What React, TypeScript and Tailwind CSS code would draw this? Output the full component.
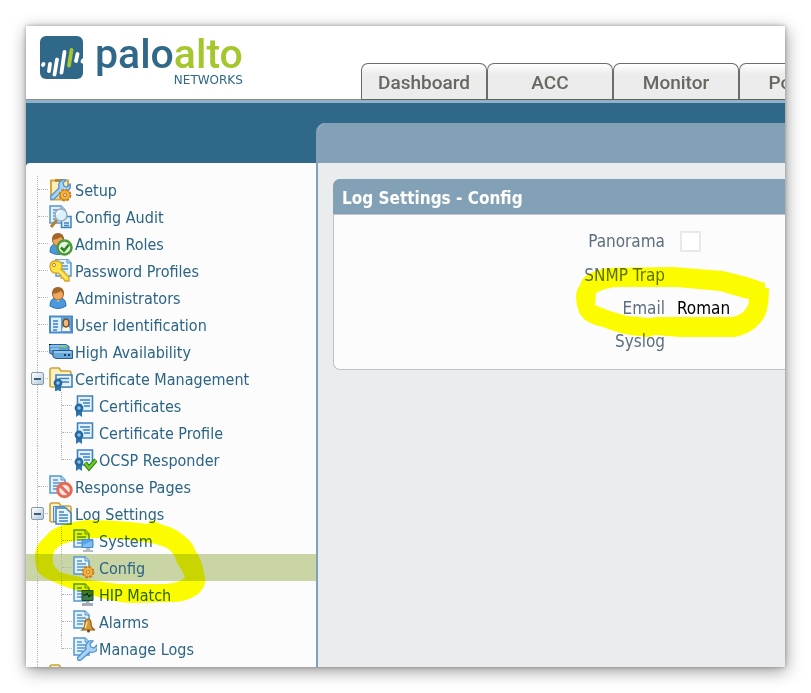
import React, { useState } from 'react';

type IconProps = { children: React.ReactNode };

const Icon: React.FC<IconProps> = ({ children }) => (
  <svg width="24" height="24" viewBox="0 0 24 24" fill="none" className="shrink-0" aria-hidden="true">
    {children}
  </svg>
);

// Shared icon parts
const Doc = ({ x = 0, y = 0 }: { x?: number; y?: number }) => (
  <g transform={`translate(${x} ${y})`}>
    <path d="M1 1h11l4 4v13H1z" fill="#e3f1fc" stroke="#5596cf" strokeWidth="1.5" />
    <path d="M12 1v4h4" fill="#bcd9f0" stroke="#5596cf" />
    <path d="M4 5h5M4 8h9M4 11h9M4 14h6" stroke="#5596cf" strokeWidth="1.3" />
  </g>
);

const Gear = ({ x, y }: { x: number; y: number }) => (
  <g transform={`translate(${x} ${y})`}>
    <circle r="5.2" fill="#f0a22e" stroke="#c27c1c" strokeWidth="2.4" strokeDasharray="2.6 1.48" />
    <circle r="4.8" fill="#f6b03c" stroke="#c9821f" strokeWidth=".7" />
    <circle r="1.5" fill="#fff0cf" stroke="#a9640f" strokeWidth=".8" />
  </g>
);

const Rosette = ({ x, y }: { x: number; y: number }) => (
  <g transform={`translate(${x} ${y})`}>
    <path d="M-3 2v7l3-2 3 2V2z" fill="#2f76b0" />
    <circle r="4.4" fill="#24699f" />
    <circle r="1.8" fill="#8cc0e6" />
  </g>
);

const Certificate = () => (
  <g>
    <path d="M4.500 2h15v15h-15z" fill="#e3f1fc" stroke="#3f83bd" strokeWidth="1.600" />
    <path d="M7 6h10M10 9h7M11 12h6" stroke="#3f83c2" strokeWidth="1.400" />
    <Rosette x={6} y={14} />
  </g>
);

const Folder = () => (
  <path d="M1 3q0-2 2-2h7l2 3h8q2 0 2 2v12q0 2-2 2H3q-2 0-2-2z" fill="#fdf0ba" stroke="#c9a23c" strokeWidth="1.6" />
);

const Wrench = ({ x = 0, y = 0 }: { x?: number; y?: number }) => (
  <g transform={`translate(${x} ${y})`}>
    <path
      d="M2 18 10 10Q9 5 12 3q2-2 5-1l-3 3 1 3 3 1 3-3q1 4-1 6-3 2-6 1L5 21q-2 1-3 0-1-2 0-3z"
      fill="#a9d2f5"
      stroke="#4f93cf"
      strokeWidth="1.3"
    />
  </g>
);

const SetupIcon = () => (
  <Icon>
    <path d="M2 2.500h17v19H2z" fill="#fbeeb8" stroke="#d3a83e" strokeWidth="2" />
    <path d="M6 1h9v3H6z" fill="#b58b38" />
    <Wrench />
    <Gear x={16} y={17} />
  </Icon>
);

const AuditIcon = () => (
  <Icon>
    <Doc />
    <path d="M12.500 11.500h9.500v11h-9.500z" fill="#dceefb" stroke="#3f83bd" strokeWidth="1.500" />
    <path d="M15 18h5M15 20.500h5" stroke="#3f83bd" strokeWidth="1.300" />
    <path d="m2 22 6-7" stroke="#b0813a" strokeWidth="3" />
    <circle cx="12" cy="10" r="6" fill="#dceffc" stroke="#9aabba" strokeWidth="1.600" />
    <path d="M8 10q0-4 4-4" stroke="#fff" strokeWidth="1.600" />
  </Icon>
);

const Person = () => (
  <g>
    <path d="M1 20q0-8 6-8h4q6 0 6 8-8 5-16 0z" fill="#4c98dd" stroke="#2d6fae" />
    <path d="m6 12 3 4 3-4z" fill="#d7ecfb" />
    <ellipse cx="9" cy="8" rx="5.500" ry="6" fill="#f0a65c" stroke="#9c6425" />
    <path d="M3 8Q3 1 9 1t6 7q-2-1-3-3Q8 8 3 8z" fill="#a0662a" />
  </g>
);

const RolesIcon = () => (
  <Icon>
    <Person />
    <circle cx="15.500" cy="15.500" r="7" fill="#e4f5dc" stroke="#4c9a38" strokeWidth="2.600" />
    <path d="m12 15.500 3 3 5-6" stroke="#2d8420" strokeWidth="2.600" />
  </Icon>
);

const PasswordIcon = () => (
  <Icon>
    <Doc x={6} y={-1} />
    <path
      d="M1 7q0-5 6-5t6 5q0 2-1 3l8 8v4h-4l-2-3-2 0v-3l-3-2q-8 1-8-7z"
      fill="#ffe23f"
      stroke="#d3a52a"
      strokeWidth="1.300"
    />
    <circle cx="5" cy="6" r="1.600" fill="#fff" stroke="#b88515" />
    <path d="m9 11 8 8" stroke="#fff6ab" />
  </Icon>
);

const AdministratorsIcon = () => (
  <Icon>
    <Person />
  </Icon>
);

const UserIdIcon = () => (
  <Icon>
    <path d="M1 3.500h22v16H1z" fill="#dff0fd" stroke="#4a8ccb" strokeWidth="2" />
    <path d="M12 4h10v15H12z" fill="#5d9fd9" />
    <path d="M4 8h5M4 11h5M4 14h5M4 17h4" stroke="#3f7fbd" strokeWidth="1.300" />
    <path d="M13 18q0-5 4-5t4 5z" fill="#fff4da" />
    <ellipse cx="17" cy="10" rx="3" ry="4" fill="#f3b877" stroke="#6d4d2d" strokeWidth="1.500" />
  </Icon>
);

const HaIcon = () => (
  <Icon>
    <path d="M0 4.500h17l3 2v8H3l-3-2z" fill="#5b9fd6" stroke="#2b649a" />
    <path d="M1 6h17M2 9h8" stroke="#b5dbf6" />
    <path d="M4 10.500h19.500v8H7l-3-1.500z" fill="#68a9dc" stroke="#28598b" />
    <path d="M5 12h17" stroke="#c4e3f8" />
    <path d="M11 7h2M15 7h2" stroke="#7ccc22" strokeWidth="2" />
    <path d="M15 15h2M19 15h2" stroke="#173f63" strokeWidth="2" />
    <path d="M0 4h2v1H0z" fill="#111" />
  </Icon>
);

const CertFolderIcon = () => (
  <Icon>
    <Folder />
    <path d="M7 8h16v12H7z" fill="#e3f1fc" stroke="#3f83bd" strokeWidth="1.600" />
    <path d="M10 11.500h10M13 15h7" stroke="#3f83c2" strokeWidth="1.500" />
    <Rosette x={9} y={16} />
  </Icon>
);

const CertificateIcon = () => (
  <Icon>
    <Certificate />
  </Icon>
);

const OcspIcon = () => (
  <Icon>
    <Certificate />
    <path d="m12 15 4 5 7-8" stroke="#2e7d16" strokeWidth="4.500" />
    <path d="m12 15 4 5 7-8" stroke="#6cc62c" strokeWidth="2.500" />
  </Icon>
);

const ResponseIcon = () => (
  <Icon>
    <Doc />
    <circle cx="15.500" cy="15" r="6.800" fill="#fbe5df" stroke="#e56b58" strokeWidth="3" />
    <path d="m11 10.500 9 9" stroke="#e56b58" strokeWidth="3" />
  </Icon>
);

const LogFolderIcon = () => (
  <Icon>
    <Folder />
    <path d="M4.500 4.500h11v15h-11z" fill="#cfe5f7" stroke="#4a8cc6" />
    <path d="M7 6h10l5 5v11H7z" fill="#eaf5fd" stroke="#3f83bd" strokeWidth="1.500" />
    <path d="M10 10h5M10 13h9M10 16h9M10 19h9" stroke="#3f83c2" strokeWidth="1.300" />
  </Icon>
);

const SystemIcon = () => (
  <Icon>
    <Doc />
    <path d="M9 10.500h11v8H9z" fill="#56a5ea" stroke="#4c8fce" />
    <path d="M10 16 19 12v6h-9z" fill="#82bff2" />
    <path d="M13 19h4v2h3v2h-10v-2h3z" fill="#b4bccb" />
  </Icon>
);

const ConfigIcon = () => (
  <Icon>
    <Doc />
    <Gear x={15} y={16} />
  </Icon>
);

const HipIcon = () => (
  <Icon>
    <Doc />
    <path d="M9 7.500h11v10H9z" fill="#3d7c46" stroke="#1f4a28" />
    <path d="M10 12h3l1-2 2 4 1-2h2" stroke="#0c1a10" />
    <path d="M13 18h3v2h4v3H9v-3h4z" fill="#a3aaba" />
  </Icon>
);

const AlarmsIcon = () => (
  <Icon>
    <Doc />
    <path d="M9 20q3-2 3-7 0-4 3-4t3 4q0 5 4 7z" fill="#d79b39" stroke="#8f5f17" strokeWidth="1.200" />
    <path d="M14 12q-1 4-2 6" stroke="#fbdc93" strokeWidth="1.500" />
    <circle cx="15.500" cy="21" r="1.500" fill="#6f4710" />
  </Icon>
);

const ManageIcon = () => (
  <Icon>
    <Doc />
    <Wrench x={3} y={2} />
  </Icon>
);

const FolderIcon = () => (
  <Icon>
    <Folder />
  </Icon>
);

type TreeItem = { label: string; icon: React.FC; children?: TreeItem[] };

const TREE: TreeItem[] = [
  { label: 'Setup', icon: SetupIcon },
  { label: 'Config Audit', icon: AuditIcon },
  { label: 'Admin Roles', icon: RolesIcon },
  { label: 'Password Profiles', icon: PasswordIcon },
  { label: 'Administrators', icon: AdministratorsIcon },
  { label: 'User Identification', icon: UserIdIcon },
  { label: 'High Availability', icon: HaIcon },
  {
    label: 'Certificate Management',
    icon: CertFolderIcon,
    children: [
      { label: 'Certificates', icon: CertificateIcon },
      { label: 'Certificate Profile', icon: CertificateIcon },
      { label: 'OCSP Responder', icon: OcspIcon },
    ],
  },
  { label: 'Response Pages', icon: ResponseIcon },
  {
    label: 'Log Settings',
    icon: LogFolderIcon,
    children: [
      { label: 'System', icon: SystemIcon },
      { label: 'Config', icon: ConfigIcon },
      { label: 'HIP Match', icon: HipIcon },
      { label: 'Alarms', icon: AlarmsIcon },
      { label: 'Manage Logs', icon: ManageIcon },
    ],
  },
  { label: '', icon: FolderIcon },
];

const TABS = ['Dashboard', 'ACC', 'Monitor', 'Policies'];

// Dotted connector: a vertical line, with an optional branch to the item
const Guide = ({ branch = true, last = false }: { branch?: boolean; last?: boolean }) => (
  <span className="flex h-full w-[23px] shrink-0 pl-[11px]" aria-hidden="true">
    <span className={`border-l border-dotted border-[#b0b4b7] ${last ? 'h-1/2' : 'h-full'}`} />
    {branch && <span className="h-1/2 w-[10px] border-b border-dotted border-[#b0b4b7]" />}
  </span>
);

type RowProps = { item: TreeItem; nested?: boolean; last?: boolean; active: string; onSelect: (label: string) => void };

const TreeRow: React.FC<RowProps> = ({ item, nested, last, active, onSelect }) => {
  const [open, setOpen] = useState(true);
  const ItemIcon = item.icon;
  const selected = item.label !== '' && item.label === active;

  return (
    <li>
      <div className={`relative flex h-[27px] items-center ${selected ? 'bg-[#c9d5a5]' : ''}`}>
        <Guide branch={!nested} />
        {nested && (
          <span className="h-full pl-px">
            <Guide last={last} />
          </span>
        )}
        {item.children && (
          <button
            type="button"
            aria-label={`Toggle ${item.label}`}
            aria-expanded={open}
            onClick={() => setOpen(!open)}
            className="absolute left-[5px] flex size-[13px] items-center justify-center rounded-[2px] border border-[#7f9db9] bg-linear-to-br from-white to-[#b9c8d6]"
          >
            <span className="h-0.5 w-[7px] bg-[#3c5f7a]" />
          </button>
        )}
        <a
          href="#"
          onClick={() => onSelect(item.label)}
          className="flex items-center gap-[2px] whitespace-nowrap text-[16px] text-[#2c6486]"
        >
          <ItemIcon />
          <span className="pt-0.5 leading-[25px]">{item.label}</span>
        </a>
      </div>
      {item.children && open && (
        <ul>
          {item.children.map((child, idx) => (
            <TreeRow
              key={child.label}
              item={child}
              nested
              last={idx === item.children!.length - 1}
              active={active}
              onSelect={onSelect}
            />
          ))}
        </ul>
      )}
    </li>
  );
};

const Logo = () => (
  <div className="flex shrink-0 items-start pl-[14px] pt-2">
    <svg width="43" height="45" viewBox="0 -2 43 45" aria-hidden="true">
      <rect width="43" height="43" rx="6" fill="#30688a" />
      <g stroke="#fff" strokeWidth="3.800" strokeLinecap="round">
        <path d="M3 29l.5-1M9 35l1-7M14.500 38.500l2.500-15M21.500 36.500 24.500 16M36 25l1.500-7M42.500 25.500l.5-1" />
        <path d="m29 29.500 2.500-15.500" stroke="#a5c72e" />
      </g>
    </svg>
    <div className="flex flex-col items-end pl-3 font-['Roboto'] font-medium">
      <div className="text-[41px] leading-[41px] text-[#30688a]">
        palo<span className="text-[#a5c72e]">alto</span>
      </div>
      <div className="font-['DejaVu_Sans'] text-[12px] leading-[10px] text-[#30688a]">NETWORKS</div>
    </div>
  </div>
);

const App: React.FC = () => {
  const [active, setActive] = useState('Config');
  const [panorama, setPanorama] = useState(false);

  return (
    <div className="h-screen bg-white p-[26px] font-['DejaVu_Sans_Condensed','DejaVu_Sans',sans-serif]">
      <div className="flex h-full flex-col overflow-hidden bg-white shadow-[0_0_4px_rgba(0,0,0,0.3),1px_4px_16px_rgba(0,0,0,0.4)]">
        {/* Header */}
        <header className="flex h-[77px] shrink-0 items-stretch border-b-[3px] border-[#8fb1cb]">
          <div className="w-[335px] shrink-0 border-b border-[#8a8d86]">
            <Logo />
          </div>
          <nav className="flex min-w-0 flex-1 items-end overflow-hidden border-b border-[#5f6259]">
            {TABS.map(tab => (
              <a
                key={tab}
                href="#"
                className="flex h-9 w-[126px] shrink-0 items-center justify-center rounded-t-[7px] border border-b-0 border-[#6b6e64] bg-linear-to-b from-white via-[#ececec] via-30% to-[#ececec] pt-1 font-['Roboto'] text-[19px] font-medium text-[#66685f]"
              >
                {tab}
              </a>
            ))}
          </nav>
        </header>

        <div className="flex min-h-0 flex-1 bg-[#30688a]">
          {/* Navigation tree */}
          <aside className="relative mt-[60px] w-[290px] shrink-0 rounded-tl-[4px] bg-[#fcfcfc] pt-[13px]">
            <ul>
              {TREE.map(item => (
                <TreeRow key={item.label} item={item} active={active} onSelect={setActive} />
              ))}
            </ul>
            <svg
              width="172"
              height="86"
              viewBox="35 519 172 86"
              className="pointer-events-none absolute left-[9px] top-[356px] mix-blend-multiply"
              aria-hidden="true"
            >
              <path
                fill="#ff0"
                fillRule="evenodd"
                d="M35 553Q37 543 45 537Q52 528 63 525Q75 521 87 520Q110 520 130 522L148 524L151 520L163 525Q175 528 183 535Q192 541 195 550Q202 560 204 573Q206 579 205 583Q202 593 193 597Q184 602 173 602L130 603L120 602Q102 599 87 593Q65 588 50 580Q42 577 38 572Q34 562 35 553ZM54 566Q51 556 55 550Q60 544 70 542Q83 538 97 538Q118 538 137 541Q157 543 167 548Q174 552 177 563Q182 570 185 577Q183 580 177 582Q170 584 160 584H120Q107 583 97 581Q87 580 80 577Q65 574 60 572Z"
              />
            </svg>
          </aside>

          {/* Content */}
          <main className="mt-5 flex min-w-0 flex-1 flex-col overflow-hidden rounded-tl-[9px] border-l-2 border-[#82a1b7] bg-[#ebecee]">
            <div className="h-10 shrink-0 bg-[#82a1b7]" />
            <div className="py-4 pl-[15px]">
              <section className="rounded-l-[7px] border border-r-0 border-[#c0c2c4] bg-[#fcfcfc]">
                <h2 className="-ml-px -mt-px flex h-9 items-center rounded-tl-[7px] border-b border-[#c0c2c4] bg-[#82a1b7] pl-[9px] pt-1 text-[17px] font-bold text-white">
                  Log Settings - Config
                </h2>
                <div className="relative grid grid-cols-[331px_1fr] gap-x-3 pb-[11px] pt-2 text-[17px] text-[#5d6f7e]">
                  <label htmlFor="panorama" className="text-right leading-9">
                    Panorama
                  </label>
                  <div className="flex items-center pl-[3px]">
                    <input
                      id="panorama"
                      type="checkbox"
                      checked={panorama}
                      onChange={e => setPanorama(e.target.checked)}
                      className="size-[21px] appearance-none border-2 border-[#e9e9e9] bg-white checked:bg-[#82a1b7]"
                    />
                  </div>
                  <span className="text-right leading-[33px]">SNMP Trap</span>
                  <span />
                  <span className="text-right leading-[33px]">Email</span>
                  <span className="leading-[33px] text-black">Roman</span>
                  <span className="text-right leading-[33px]">Syslog</span>
                  <span />
                  <svg
                    width="195"
                    height="72"
                    viewBox="575 266 195 72"
                    className="pointer-events-none absolute left-[241px] top-[51px] mix-blend-multiply"
                    aria-hidden="true"
                  >
                    <path
                      fill="#ff0"
                      fillRule="evenodd"
                      d="M576 298Q576 290 580 285Q582 278 587 275Q597 269 610 268L673 267L723 271Q735 274 747 277L765 283V288H769Q769 300 767 310Q765 318 760 323Q752 333 735 337H680L655 335L648 337L630 335Q615 332 603 327Q593 325 585 320Q577 314 576 298ZM596 293Q602 289 615 287H677L720 291Q736 296 749 299Q749 304 747 307Q744 314 733 317H657L650 318L627 316Q608 311 595 305Z"
                    />
                  </svg>
                </div>
              </section>
            </div>
          </main>
        </div>
      </div>
    </div>
  );
};

export default App;
